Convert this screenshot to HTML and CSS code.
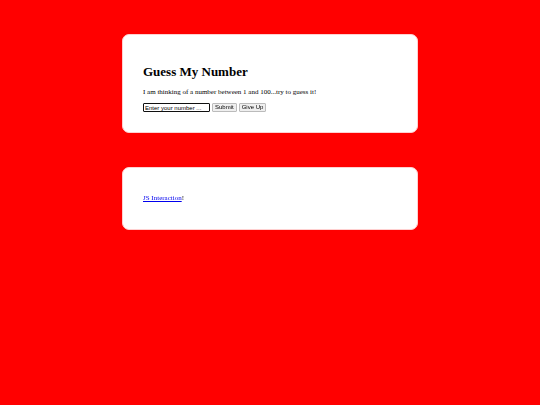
FILE: index.html
```html
<!DOCTYPE html>
<html lang="en">
<head>
  <meta charset="UTF-8">
  <meta name="viewport" content="width=device-width, initial-scale=1.0">
  <title>Guess My Number</title>
  <link rel="stylesheet" href="styles.css">
</head>
<body>
  <div class="card">
    <h1>Guess My Number</h1>
    <p id="message">I am thinking of a number between 1 and 100...try to guess it!</p>
    <form class="guess-form" id="guessForm">
      <input type="text" id="guess" value="Enter your number ..." aria-labelledby="message" autofocus>
      <button type="submit">Submit</button>
      <button type="button" id="giveUp">Give Up</button>
    </form>
  </div>

  <div class="card">
    <p><a href="#">JS Interaction</a>!</p>
  </div>
</body>
</html>
```

FILE: styles.css
```css
body {
  margin: 0;
  padding: 0;
  background-color: #ff0000;
  font-family: "Liberation Serif", "Times New Roman", serif;
  font-size: 7px;
  line-height: 8px;
}
.card {
  max-width: 254px;
  margin: 34px auto;
  padding: 20px;
  background-color: #fff;
  border: 1px solid #ffd0d0;
  border-radius: 7px;
}
h1 {
  margin: 9px 0 8px;
  font-size: 13px;
  line-height: 16px;
}
p {
  margin: 6px 0 7px;
}
/* Guess box and buttons */
.guess-form {
  display: flex;
  gap: 2px;
}
.guess-form input,
.guess-form button {
  box-sizing: border-box;
  height: 9px;
  margin: 0;
  font-family: "Liberation Sans", Arial, sans-serif;
  font-size: 6px;
  line-height: 7px;
  color: #000;
}
.guess-form input {
  width: 67px;
  padding: 0 1px;
  border: 1px solid #767676;
  border-radius: 1px;
}
.guess-form input:focus {
  border-color: #101010;
  outline: none;
}
.guess-form button {
  padding: 0 2px;
  border: 1px solid #bbb;
  border-radius: 1px;
  background-color: #efefef;
}
a {
  color: #0000ee;
}
```
